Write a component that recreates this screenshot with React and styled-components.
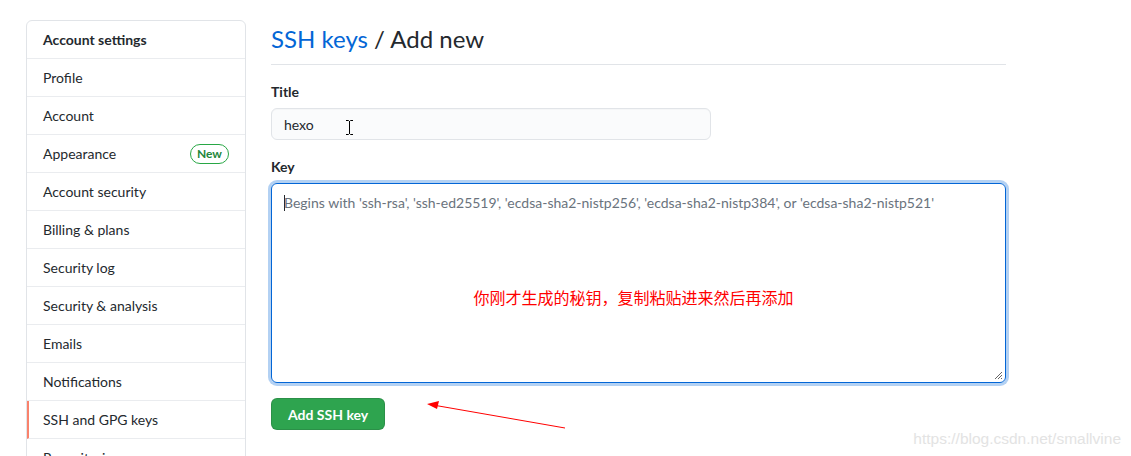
import React from "react";
import styled, { createGlobalStyle } from "styled-components";

const GlobalStyle = createGlobalStyle`
  html, body {
    margin: 0;
    padding: 0;
    background: #ffffff;
    overflow: hidden;
  }
  body {
    font-family: "Segoe UI", Lato, "Noto Sans", "Noto Sans CJK SC", sans-serif;
    color: #24292e;
    font-size: 14px;
  }
  *, *::before, *::after {
    box-sizing: border-box;
  }
`;

const Page = styled.div`
  position: relative;
  display: flex;
  gap: 25px;
  padding: 20px 0 0 26px;
  height: 456px;
  overflow: hidden;
`;

const Menu = styled.nav`
  width: 220px;
  flex-shrink: 0;
  border: 1px solid #e1e4e8;
  border-radius: 6px;
  align-self: flex-start;
  background: #fff;
`;

const MenuHeading = styled.div`
  height: 38px;
  display: flex;
  align-items: center;
  padding: 0 16px;
  font-weight: 700;
  border-bottom: 1px solid #eaecef;
`;

const MenuItem = styled.a`
  height: 38px;
  display: flex;
  align-items: center;
  justify-content: space-between;
  padding: 0 16px 0 ${(p) => (p.$selected ? "14px" : "16px")};
  border-bottom: 1px solid #eaecef;
  border-left: ${(p) => (p.$selected ? "2px solid #f9826c" : "none")};
  color: #24292e;
  text-decoration: none;
`;

const NewBadge = styled.span`
  font-size: 12px;
  font-weight: 700;
  line-height: 18px;
  padding: 0 6px;
  border: 1px solid #28a745;
  border-radius: 2em;
  color: #22863a;
`;

const Main = styled.main`
  width: 735px;
`;

const Heading = styled.h2`
  margin: 1px 0 0;
  padding-bottom: 7px;
  font-size: 24px;
  font-weight: 400;
  line-height: 1.5;
  border-bottom: 1px solid #e1e4e8;
`;

const Crumb = styled.a`
  color: #0366d6;
  text-decoration: none;
`;

const Field = styled.div`
  margin-top: ${(p) => p.$top}px;
`;

const Label = styled.label`
  display: block;
  font-weight: 700;
  margin-bottom: 8px;
`;

const InputWrap = styled.div`
  position: relative;
  width: 440px;
`;

const TextInput = styled.div`
  height: 32px;
  border: 1px solid #e1e4e8;
  border-radius: 6px;
  background: #fafbfc;
  display: flex;
  align-items: center;
  padding: 0 12px;
  box-shadow: inset 0 1px 0 rgba(225, 228, 232, 0.2);
`;

const IBeam = styled.svg`
  position: absolute;
  left: 75px;
  top: 12px;
`;

const AreaWrap = styled.div`
  position: relative;
`;

const TextArea = styled.div`
  border: 1px solid #0366d6;
  border-radius: 6px;
  box-shadow: 0 0 0 3px rgba(3, 102, 214, 0.3);
  padding: 10px 12px;
  height: 200px;
  color: #6a737d;
  position: relative;
`;

const Caret = styled.span`
  display: inline-block;
  width: 1px;
  height: 16px;
  background: #24292e;
  vertical-align: -3px;
  margin-right: -1px;
`;

const Note = styled.div`
  position: absolute;
  left: 0;
  right: 10px;
  top: 104px;
  text-align: center;
  color: #ff0000;
  font-family: "Noto Sans CJK SC", sans-serif;
  font-size: 16px;
  line-height: 20px;
`;

const Grip = styled.svg`
  position: absolute;
  right: 2px;
  bottom: 2px;
`;

const SubmitRow = styled.div`
  position: relative;
  margin-top: 15px;
`;

const Button = styled.button`
  font-family: inherit;
  font-size: 14px;
  font-weight: 700;
  color: #fff;
  background: #2ea44f;
  border: 1px solid rgba(27, 31, 35, 0.15);
  border-radius: 6px;
  height: 32px;
  padding: 0 16px;
`;

const Arrow = styled.svg`
  position: absolute;
  left: 150px;
  top: 0;
`;

const Watermark = styled.div`
  position: absolute;
  right: 10px;
  bottom: 8px;
  font-family: "Liberation Sans", Arial, sans-serif;
  font-size: 15.5px;
  color: #e3e3e3;
`;

const items = [
  "Profile",
  "Account",
  "Appearance",
  "Account security",
  "Billing & plans",
  "Security log",
  "Security & analysis",
  "Emails",
  "Notifications",
  "SSH and GPG keys",
  "Repositories",
];

const App = () => (
  <>
    <GlobalStyle />
    <Page>
      <Menu>
        <MenuHeading>Account settings</MenuHeading>
        {items.map((name) => (
          <MenuItem key={name} href="#" $selected={name === "SSH and GPG keys"}>
            {name}
            {name === "Appearance" && <NewBadge>New</NewBadge>}
          </MenuItem>
        ))}
      </Menu>
      <Main>
        <Heading>
          <Crumb href="#">SSH keys</Crumb> / Add new
        </Heading>
        <Field $top={18}>
          <Label>Title</Label>
          <InputWrap>
            <TextInput>hexo</TextInput>
            <IBeam width="7" height="15" viewBox="0 0 7 15">
              <path d="M0 0.5h2.5M4.5 0.5h2.5M3.5 1v13M0 14.5h2.5M4.5 14.5h2.5M2.5 0.5l1 1l1-1M2.5 14.5l1-1l1 1" stroke="#000" strokeWidth="1" fill="none" />
            </IBeam>
          </InputWrap>
        </Field>
        <Field $top={18}>
          <Label>Key</Label>
          <AreaWrap>
            <TextArea>
              <Caret />
              Begins with 'ssh-rsa', 'ssh-ed25519', 'ecdsa-sha2-nistp256', 'ecdsa-sha2-nistp384', or 'ecdsa-sha2-nistp521'
              <Grip width="9" height="9" viewBox="0 0 9 9">
                <path d="M8 1L1 8M8 4L4 8M8 7L7 8" stroke="#666" strokeWidth="1" />
              </Grip>
            </TextArea>
            <Note>你刚才生成的秘钥，复制粘贴进来然后再添加</Note>
          </AreaWrap>
        </Field>
        <SubmitRow>
          <Button>Add SSH key</Button>
          <Arrow width="150" height="34" viewBox="0 0 150 34">
            <line x1="144" y1="30" x2="12" y2="7" stroke="#ff0000" strokeWidth="1" />
            <polygon points="6,6 18,3 16,11" fill="#ff0000" />
          </Arrow>
        </SubmitRow>
      </Main>
      <Watermark>https://blog.csdn.net/smallvine</Watermark>
    </Page>
  </>
);

export default App;
